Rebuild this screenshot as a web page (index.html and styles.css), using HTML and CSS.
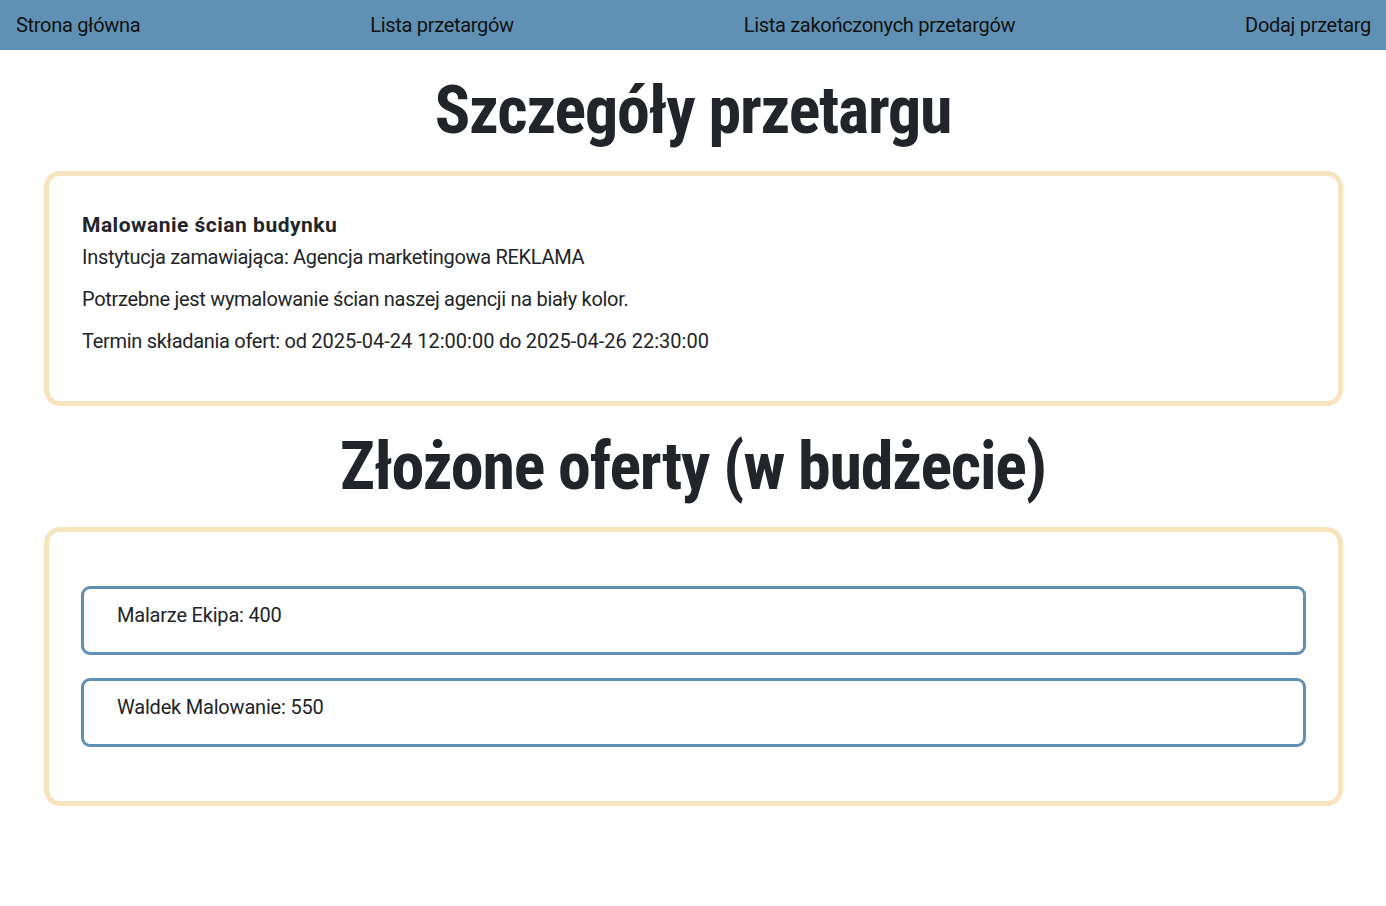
FILE: index.html
```html
<!DOCTYPE html>
<html lang="pl">
<head>
<meta charset="utf-8">
<title>Szczegóły przetargu</title>
<link rel="stylesheet" href="styles.css">
</head>
<body>
<nav class="topnav">
  <a class="nav-link" href="#">Strona główna</a>
  <a class="nav-link" href="#">Lista przetargów</a>
  <a class="nav-link" href="#">Lista zakończonych przetargów</a>
  <a class="nav-link" href="#">Dodaj przetarg</a>
</nav>
<main>
  <h1 class="page-title">Szczegóły przetargu</h1>
  <section class="card details">
    <h3 class="tender-name">Malowanie ścian budynku</h3>
    <p class="line">Instytucja zamawiająca: Agencja marketingowa REKLAMA</p>
    <p class="line">Potrzebne jest wymalowanie ścian naszej agencji na biały kolor.</p>
    <p class="line">Termin składania ofert: od <time class="date">2025-04-24 12:00:00</time> do <time class="date">2025-04-26 22:30:00</time></p>
  </section>
  <h1 class="page-title">Złożone oferty (w budżecie)</h1>
  <section class="card offers">
    <div class="offer"><p class="offer-text">Malarze Ekipa: 400</p></div>
    <div class="offer"><p class="offer-text">Waldek Malowanie: 550</p></div>
  </section>
</main>
</body>
</html>
```
FILE: styles.css
```css
html, body {
  margin: 0;
  padding: 0;
  background: #ffffff;
  color: #212529;
  font-family: Roboto, "Liberation Sans", sans-serif;
}

.topnav {
  height: 50px;
  background: #6091b4;
  display: flex;
  justify-content: space-between;
  align-items: center;
  padding: 0 15px 0 16px;
}

.nav-link {
  color: #111;
  text-decoration: none;
  font-size: 20px;
  font-weight: 400;
  letter-spacing: -0.3px;
}

.page-title {
  margin: 22px 0;
  line-height: 77px;
  height: 77px;
  font-size: 66px;
  font-weight: 700;
  font-stretch: condensed;
  letter-spacing: -1.2px;
  text-align: center;
  color: #212529;
}

.card {
  margin: 0 43px 0 44px;
  border: 5px solid #f5e4bd;
  border-radius: 16px;
}

.details {
  padding: 32px 32px 31px 33px;
}

.tender-name {
  margin: 4px 0 6px;
  font-size: 21px;
  line-height: 26px;
  font-weight: 700;
  letter-spacing: 0.5px;
}

.line {
  margin: 0 0 16px;
  font-size: 20px;
  line-height: 26px;
  letter-spacing: -0.3px;
}

.date {
  letter-spacing: 0;
}

.offers {
  padding: 54px 32px;
  display: flex;
  flex-direction: column;
  gap: 23px;
}

.offer {
  border: 3px solid #6091b4;
  border-radius: 9px;
  padding: 14px 32px 9px 33px;
}

.offer-text {
  margin: 0 0 16px;
  font-size: 20px;
  line-height: 24px;
  letter-spacing: -0.2px;
}
```
